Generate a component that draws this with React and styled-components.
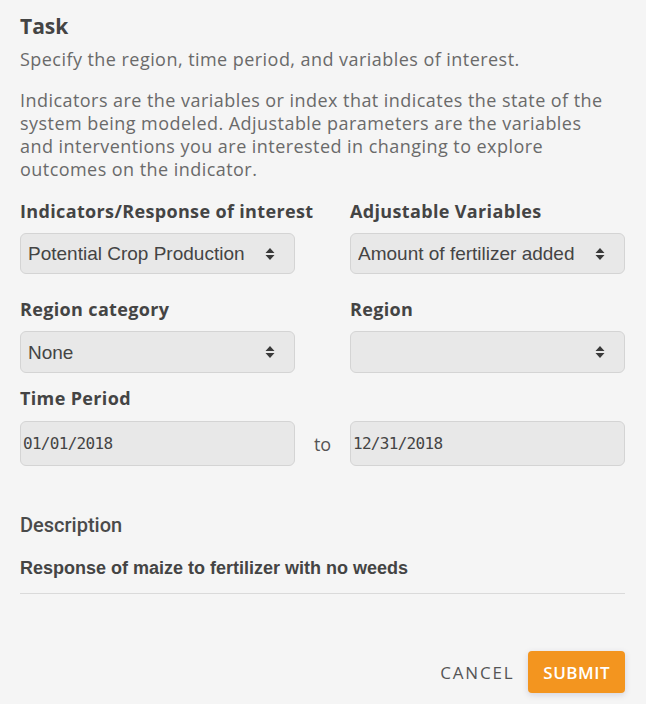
import React from "react";
import styled, { createGlobalStyle } from "styled-components";

const GlobalStyle = createGlobalStyle`
  html, body {
    margin: 0;
    padding: 0;
    background: #f5f5f5;
  }
  * { box-sizing: border-box; }
`;

const Page = styled.div`
  width: 646px;
  min-height: 704px;
  padding: 12px 21px 0 20px;
  background: #f5f5f5;
  font-family: "Open Sans", Lato, sans-serif;
  color: #444;
`;

const Title = styled.h2`
  margin: 0;
  font-size: 21px;
  line-height: 28px;
  font-weight: 700;
  color: #444;
`;

const Subtitle = styled.p`
  margin: ${(p) => p.$top || 0}px 0 0;
  max-width: 592px;
  font-size: 18px;
  line-height: 23px;
  letter-spacing: 0.45px;
  color: #6a6a6a;
`;

const Row = styled.div`
  display: grid;
  grid-template-columns: ${(p) => (p.$range ? "275px 55px 275px" : "275px 275px")};
  column-gap: ${(p) => (p.$range ? "0" : "55px")};
  align-items: end;
  margin-top: ${(p) => p.$top}px;
`;

const Field = styled.div`
  display: flex;
  flex-direction: column;
  gap: 10px;
  margin-top: ${(p) => p.$top || 0}px;
`;

const Label = styled.label`
  font-size: 18px;
  line-height: 23px;
  font-weight: 700;
  letter-spacing: 0.35px;
  color: #444;
  white-space: nowrap;
`;

const SelectWrap = styled.div`
  position: relative;
  height: ${(p) => p.$h || 41}px;
`;

const Select = styled.select`
  appearance: none;
  -webkit-appearance: none;
  width: 100%;
  height: 100%;
  padding: 0 30px 0 7px;
  background: #e8e8e8;
  border: 1px solid #d4d4d4;
  border-radius: 6px;
  font-family: "Liberation Sans", Arial, sans-serif;
  font-size: 19px;
  color: #444;
  outline: none;
`;

const Arrows = styled.svg`
  position: absolute;
  right: 20px;
  top: 50%;
  transform: translateY(-50%);
  pointer-events: none;
`;

const DateInput = styled.input`
  width: 100%;
  height: 45px;
  padding: 0 2px;
  background: #e8e8e8;
  border: 1px solid #d4d4d4;
  border-radius: 6px;
  font-family: "DejaVu Sans Mono", "Liberation Mono", monospace;
  font-size: 16px;
  letter-spacing: -0.7px;
  color: #444;
  outline: none;
`;

const To = styled.span`
  height: 45px;
  display: flex;
  align-items: center;
  justify-content: center;
  font-size: 18px;
  color: #555;
`;

const DescLabel = styled.div`
  margin-top: 48px;
  font-family: Roboto, "Liberation Sans", sans-serif;
  font-weight: 500;
  font-size: 20px;
  line-height: 23px;
  color: #4a4a4a;
`;

const DescText = styled.div`
  margin-top: 20px;
  padding-bottom: 13px;
  border-bottom: 1px solid #dadada;
  font-family: "Liberation Sans", Arial, sans-serif;
  font-weight: 700;
  font-size: 18px;
  line-height: 23px;
  color: #444;
`;

const Actions = styled.div`
  display: flex;
  justify-content: flex-end;
  align-items: center;
  gap: 14px;
  margin-top: 57px;
`;

const Button = styled.button`
  height: 42px;
  padding: ${(p) => (p.$primary ? "0 15px" : "0")};
  border: none;
  border-radius: 4px;
  background: ${(p) => (p.$primary ? "#f3951f" : "transparent")};
  color: ${(p) => (p.$primary ? "#fff" : "#555")};
  box-shadow: ${(p) => (p.$primary ? "0 2px 6px rgba(60, 60, 120, 0.18)" : "none")};
  font-family: "Open Sans", Lato, sans-serif;
  font-size: 17px;
  font-weight: ${(p) => (p.$primary ? 600 : 400)};
  letter-spacing: ${(p) => (p.$primary ? "0.5px" : "1.8px")};
  text-transform: uppercase;
  cursor: pointer;
`;

const UpDown = () => (
  <Arrows width="10" height="12" viewBox="0 0 10 12">
    <path d="M5 0 L9.5 5 L0.5 5 Z M5 12 L9.5 7 L0.5 7 Z" fill="#3a3a3a" />
  </Arrows>
);

const SelectField = ({ label, value, options, height }) => (
  <Field>
    <Label>{label}</Label>
    <SelectWrap $h={height}>
      <Select defaultValue={value}>
        {options.map((o) => (
          <option key={o} value={o}>
            {o}
          </option>
        ))}
      </Select>
      <UpDown />
    </SelectWrap>
  </Field>
);

export default function App() {
  return (
    <>
      <GlobalStyle />
      <Page>
        <Title>Task</Title>
        <Subtitle $top={8}>Specify the region, time period, and variables of interest.</Subtitle>
        <Subtitle $top={18}>
          Indicators are the variables or index that indicates the state of the system being
          modeled. Adjustable parameters are the variables and interventions you are interested in
          changing to explore outcomes on the indicator.
        </Subtitle>

        <Row $top={19}>
          <SelectField
            label="Indicators/Response of interest"
            value="Potential Crop Production"
            options={["Potential Crop Production"]}
          />
          <SelectField
            label="Adjustable Variables"
            value="Amount of fertilizer added"
            options={["Amount of fertilizer added"]}
          />
        </Row>

        <Row $top={24}>
          <SelectField label="Region category" value="None" options={["None"]} height={42} />
          <SelectField label="Region" value="" options={[""]} height={42} />
        </Row>

        <Field $top={14}>
          <Label>Time Period</Label>
        </Field>
        <Row $range $top={11}>
          <DateInput defaultValue="01/01/2018" readOnly />
          <To>to</To>
          <DateInput defaultValue="12/31/2018" readOnly />
        </Row>

        <DescLabel>Description</DescLabel>
        <DescText>Response of maize to fertilizer with no weeds</DescText>

        <Actions>
          <Button>Cancel</Button>
          <Button $primary>Submit</Button>
        </Actions>
      </Page>
    </>
  );
}
